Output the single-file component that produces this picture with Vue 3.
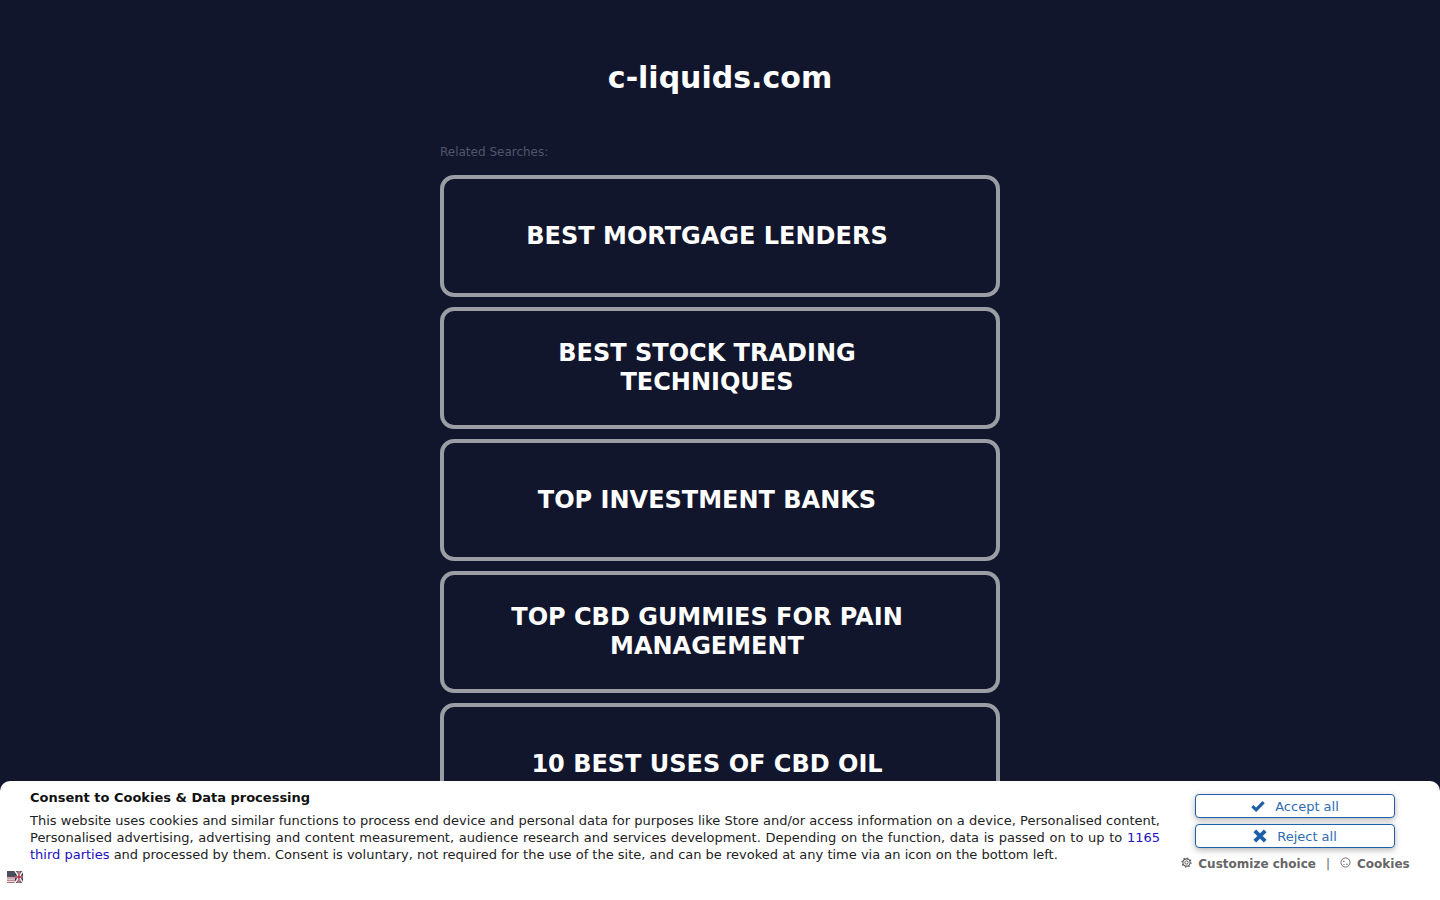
<script setup>
const links = [
  'Best Mortgage Lenders',
  'Best Stock Trading Techniques',
  'Top Investment Banks',
  'Top CBD Gummies for Pain Management',
  '10 Best Uses of CBD Oil',
]
</script>

<template>
  <div class="page">
    <h1 class="domain">c-liquids.com</h1>
    <div class="searches">
      <p class="searches-label">Related Searches:</p>
      <a v-for="link in links" :key="link" class="search-link" href="#">
        <span class="search-text">{{ link }}</span>
      </a>
    </div>
  </div>

  <div class="consent">
    <svg class="flag" viewBox="0 0 16 12" width="16" height="12">
      <rect width="16" height="12" fill="#f4eeee" />
      <path d="M0 7h8M0 9.2h8M0 11.4h8" stroke="#a5606a" stroke-width="1" />
      <rect width="8" height="6" fill="#4a4f60" />
      <rect x="8" width="8" height="12" fill="#24243c" />
      <path d="M8 0l8 12M16 0L8 12" stroke="#eee" stroke-width="1.6" />
      <path d="M12 0v12M8 6h8" stroke="#eee" stroke-width="2.6" />
      <path d="M12 0v12M8 6h8" stroke="#a82a3a" stroke-width="1.3" />
    </svg>
    <div class="consent-main">
      <div class="consent-title">Consent to Cookies &amp; Data processing</div>
      <p class="consent-text">
        This website uses cookies and similar functions to process end device and personal data for purposes like Store and/or access information on a device, Personalised content, Personalised advertising, advertising and content measurement, audience research and services development. Depending on the function, data is passed on to up to <a href="#" class="vendors">1165 third parties</a> and processed by them. Consent is voluntary, not required for the use of the site, and can be revoked at any time via an icon on the bottom left.
      </p>
    </div>
    <div class="consent-side">
      <button class="consent-btn" type="button">
        <svg class="icon-check" viewBox="0 0 14 12" width="14" height="12">
          <path d="M1.4 6.2l3.7 3.6L12.6 2.2" fill="none" stroke="#1e5fa8" stroke-width="3.2" />
        </svg>
        Accept all
      </button>
      <button class="consent-btn" type="button">
        <svg class="icon-x" viewBox="0 0 14 14" width="14" height="14">
          <path d="M1.8 1.8l10.4 10.4M12.2 1.8L1.8 12.2" fill="none" stroke="#1e5fa8" stroke-width="3.8" />
        </svg>
        Reject all
      </button>
      <div class="consent-links">
        <a href="#" class="small-link">
          <svg viewBox="0 0 12 12" width="11" height="11">
            <circle cx="6" cy="6" r="1.8" fill="none" stroke="#555" stroke-width="1" />
            <circle cx="6" cy="6" r="4" fill="none" stroke="#555" stroke-width="1.2" />
            <circle cx="6" cy="6" r="5" fill="none" stroke="#555" stroke-width="1.2" stroke-dasharray="1.6 2.3" />
          </svg>
          Customize choice
        </a>
        <span class="divider">|</span>
        <a href="#" class="small-link">
          <svg viewBox="0 0 12 12" width="11" height="11">
            <circle cx="6" cy="6" r="5" fill="none" stroke="#555" stroke-width="0.9" />
            <circle cx="4.2" cy="4.6" r="0.8" fill="#555" />
            <circle cx="7.6" cy="7.8" r="0.8" fill="#555" />
            <circle cx="4.4" cy="8" r="0.6" fill="#555" />
          </svg>
          Cookies
        </a>
      </div>
    </div>
  </div>
</template>

<style>
html, body {
  margin: 0;
  background: #11162d;
  overflow: hidden;
}
</style>

<style scoped>
.page {
  height: 900px;
  box-sizing: border-box;
  padding-top: 59px;
  background: #11162d;
  font-family: "DejaVu Sans", sans-serif;
  overflow: hidden;
}
.domain {
  margin: 0;
  text-align: center;
  color: #fff;
  font-size: 30px;
  line-height: 38px;
  font-weight: 700;
}
.searches {
  width: 560px;
  margin: 47px auto 0;
}
.searches-label {
  margin: 0 0 14px;
  color: #50556a;
  font-size: 12px;
  line-height: 17px;
}
.search-link {
  display: flex;
  align-items: center;
  justify-content: center;
  box-sizing: border-box;
  height: 122px;
  margin-bottom: 10px;
  padding: 0 50px 0 24px;
  border: 4px solid #9a9da3;
  border-radius: 14px;
  color: #fff;
  text-decoration: none;
}
.search-text {
  max-width: 420px;
  text-align: center;
  text-transform: uppercase;
  font-size: 24px;
  line-height: 29px;
  font-weight: 700;
}
.consent {
  position: fixed;
  left: 0;
  right: 0;
  bottom: 0;
  height: 119px;
  box-sizing: border-box;
  display: flex;
  padding: 8px 31px 0 30px;
  background: #fff;
  border-radius: 10px 10px 0 0;
  font-family: "DejaVu Sans", sans-serif;
}
.flag {
  position: absolute;
  left: 7px;
  top: 90px;
}
.consent-main {
  width: 1130px;
  flex-shrink: 0;
}
.consent-title {
  color: #111;
  font-size: 13px;
  line-height: 17px;
  font-weight: 700;
}
.consent-text {
  margin: 6px 0 0;
  color: #222;
  font-size: 13px;
  line-height: 17px;
  text-align: justify;
}
.vendors {
  color: #2110c0;
  text-decoration: none;
}
.consent-side {
  margin-left: 22px;
  width: 227px;
  display: flex;
  flex-direction: column;
  align-items: center;
}
.consent-btn {
  display: flex;
  align-items: center;
  justify-content: center;
  gap: 10px;
  box-sizing: border-box;
  width: 200px;
  height: 24px;
  margin: 5px 0 6px -1px;
  padding: 0;
  background: #fff;
  border: 1.5px solid #1e5fa8;
  border-radius: 4px;
  color: #2f6cb0;
  font-family: inherit;
  font-size: 13px;
  box-shadow: 0 2px 6px rgba(0, 0, 0, 0.3);
}
.consent-btn + .consent-btn {
  margin-top: 0;
}
.consent-links {
  display: flex;
  align-items: center;
  gap: 10px;
  margin-top: 2px;
  color: #666;
  font-size: 12px;
  line-height: 17px;
  white-space: nowrap;
}
.small-link {
  display: flex;
  align-items: center;
  gap: 6px;
  color: #666;
  font-weight: 700;
  text-decoration: none;
}
.small-link svg {
  margin-top: -4px;
}
.divider {
  font-weight: 400;
}
</style>
